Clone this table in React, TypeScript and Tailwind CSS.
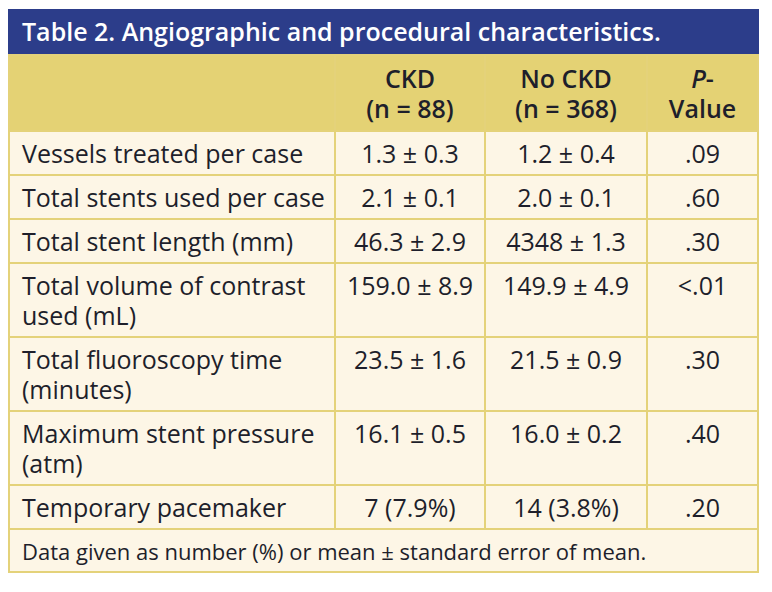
// Table 2 — angiographic and procedural characteristics

const rows: [string, string, string, string][] = [
  ["Vessels treated per case", "1.3 ± 0.3", "1.2 ± 0.4", ".09"],
  ["Total stents used per case", "2.1 ± 0.1", "2.0 ± 0.1", ".60"],
  ["Total stent length (mm)", "46.3 ± 2.9", "4348 ± 1.3", ".30"],
  ["Total volume of contrast used (mL)", "159.0 ± 8.9", "149.9 ± 4.9", "<.01"],
  ["Total fluoroscopy time (minutes)", "23.5 ± 1.6", "21.5 ± 0.9", ".30"],
  ["Maximum stent pressure (atm)", "16.1 ± 0.5", "16.0 ± 0.2", ".40"],
  ["Temporary pacemaker", "7 (7.9%)", "14 (3.8%)", ".20"],
];

export default function App() {
  return (
    <div className="min-h-[592px] w-[772px] bg-white pl-[8px] pt-[9px] font-['Open_Sans',sans-serif] text-[#1e1f2b]">
      <div className="w-[751px]">
        <div className="flex h-[45px] items-center bg-[#2c3d8a] px-[14px] text-[25px] font-semibold text-white">
          Table 2. Angiographic and procedural characteristics.
        </div>
        <table className="w-full table-fixed border-collapse border-2 border-[#e4d27a] bg-[#fdf6e6] text-[25px] leading-[30px]">
          <colgroup>
            <col className="w-[326px]" />
            <col className="w-[150px]" />
            <col className="w-[162px]" />
            <col />
          </colgroup>
          <thead>
            <tr className="h-[76px] bg-[#e4d274]">
              <th className="border-2 border-[#e4d27a]"></th>
              <th className="border-2 border-[#e4d27a] text-center font-semibold">
                CKD
                <br />
                (n = 88)
              </th>
              <th className="border-2 border-[#e4d27a] text-center font-semibold">
                No CKD
                <br />
                (n = 368)
              </th>
              <th className="border-2 border-[#e4d27a] text-center font-semibold">
                <i>P</i>-
                <br />
                Value
              </th>
            </tr>
          </thead>
          <tbody>
            {rows.map(([label, ckd, noCkd, p]) => (
              <tr key={label}>
                <td className="border-2 border-[#e4d27a] py-[6px] pl-[12px] pr-[6px] align-top">{label}</td>
                <td className="border-2 border-[#e4d27a] py-[6px] text-center align-top">{ckd}</td>
                <td className="border-2 border-[#e4d27a] py-[6px] text-center align-top">{noCkd}</td>
                <td className="border-2 border-[#e4d27a] py-[6px] text-center align-top">{p}</td>
              </tr>
            ))}
            <tr className="h-[43px]">
              <td colSpan={4} className="border-2 border-[#e4d27a] px-[12px] text-[22px] leading-[26px]">
                Data given as number (%) or mean ± standard error of mean.
              </td>
            </tr>
          </tbody>
        </table>
      </div>
    </div>
  );
}
